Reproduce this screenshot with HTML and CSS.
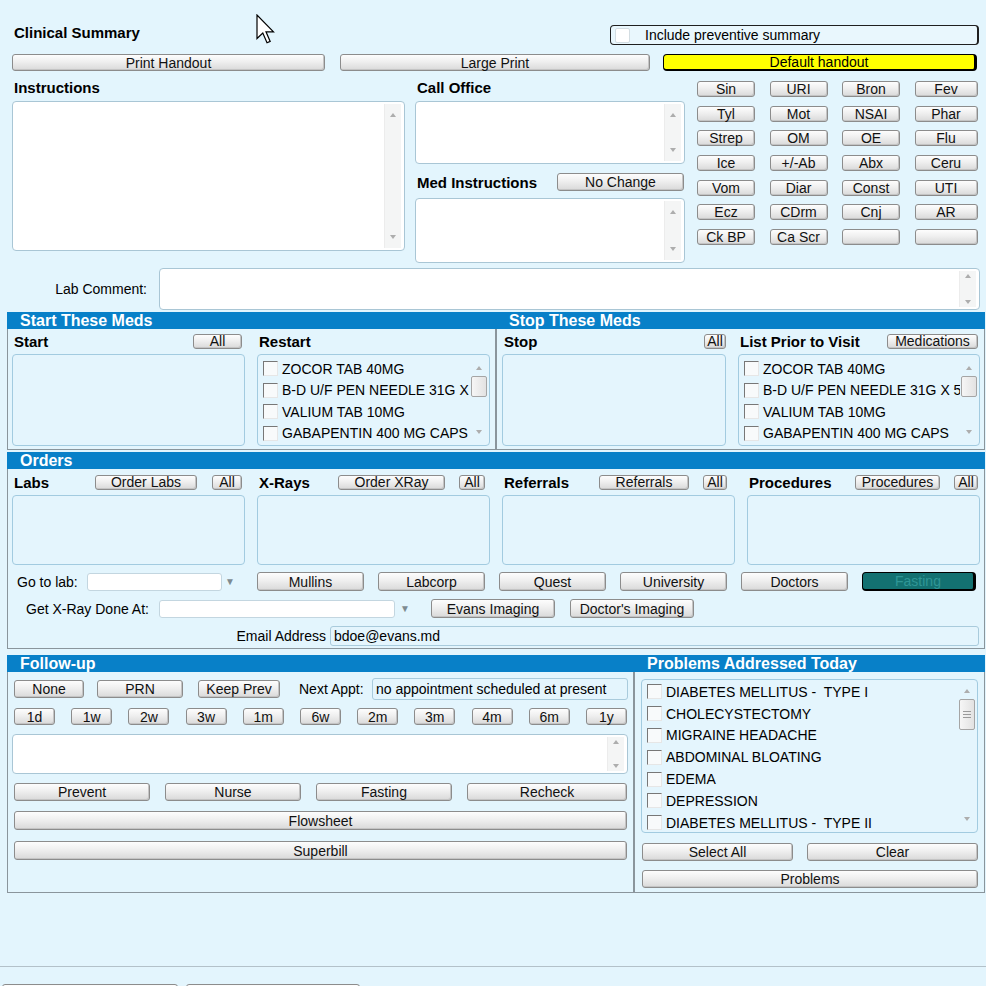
FILE: index.html
```html
<!DOCTYPE html>
<html>
<head>
<meta charset="utf-8">
<title>Clinical Summary</title>
<link rel="stylesheet" href="styles.css">
</head>
<body>
<div class="page">
  <svg class="cursor" width="19" height="30" viewBox="0 0 19 30"><path d="M1 1 L1 24.5 L6.8 19 L11 28.8 L14.2 27.4 L10 17.8 L17.5 17.8 Z" fill="#fff" stroke="#000" stroke-width="1.2"/></svg>

  <div class="top">
    <div class="row-a">
      <div class="title">Clinical Summary</div>
      <div class="prevbox"><span class="pchk"></span><span>Include preventive summary</span></div>
    </div>
    <div class="row-b">
      <button class="btn b-print">Print Handout</button>
      <button class="btn b-large">Large Print</button>
      <button class="btn b-default">Default handout</button>
    </div>
    <div class="row-c">
      <div class="col-instr">
        <div class="lbl">Instructions</div>
        <div class="ta ta-instr"><div class="sb"><i class="up"></i><i class="dn"></i></div></div>
      </div>
      <div class="col-mid">
        <div class="lbl">Call Office</div>
        <div class="ta ta-call"><div class="sb"><i class="up"></i><i class="dn"></i></div></div>
        <div class="med-row"><span class="lbl-b">Med Instructions</span><button class="btn b-nochange">No Change</button></div>
        <div class="ta ta-med"><div class="sb"><i class="up"></i><i class="dn"></i></div></div>
      </div>
      <div class="quick">
        <button class="btn q">Sin</button><button class="btn q">URI</button><button class="btn q">Bron</button><button class="btn q">Fev</button>
        <button class="btn q">Tyl</button><button class="btn q">Mot</button><button class="btn q">NSAI</button><button class="btn q">Phar</button>
        <button class="btn q">Strep</button><button class="btn q">OM</button><button class="btn q">OE</button><button class="btn q">Flu</button>
        <button class="btn q">Ice</button><button class="btn q">+/-Ab</button><button class="btn q">Abx</button><button class="btn q">Ceru</button>
        <button class="btn q">Vom</button><button class="btn q">Diar</button><button class="btn q">Const</button><button class="btn q">UTI</button>
        <button class="btn q">Ecz</button><button class="btn q">CDrm</button><button class="btn q">Cnj</button><button class="btn q">AR</button>
        <button class="btn q">Ck BP</button><button class="btn q">Ca Scr</button><button class="btn q"></button><button class="btn q"></button>
      </div>
    </div>
    <div class="row-d">
      <span class="lc-label">Lab Comment:</span>
      <div class="ta ta-lab"><div class="sb tight"><i class="up"></i><i class="dn"></i></div></div>
    </div>
  </div>

  <div class="sections">
    <div class="meds">
      <section class="box">
        <div class="hdr">Start These Meds</div>
        <div class="mbody start-body">
          <div class="lrow"><b>Start</b><button class="btn sm s-all">All</button></div>
          <div class="lrow"><b>Restart</b></div>
          <div class="list"></div>
          <div class="list chk">
            <div class="items">
              <div class="it"><span class="cb"></span>ZOCOR TAB 40MG</div>
              <div class="it"><span class="cb"></span>B-D U/F PEN NEEDLE 31G X</div>
              <div class="it"><span class="cb"></span>VALIUM TAB 10MG</div>
              <div class="it"><span class="cb"></span>GABAPENTIN 400 MG CAPS</div>
            </div>
            <div class="lsb"><i class="up"></i><span class="thumb"></span><span class="fill"></span><i class="dn"></i></div>
          </div>
        </div>
      </section>
      <section class="box">
        <div class="hdr">Stop These Meds</div>
        <div class="mbody stop-body">
          <div class="lrow"><b>Stop</b><button class="btn sm st-all">All</button></div>
          <div class="lrow"><b>List Prior to Visit</b><button class="btn sm st-med">Medications</button></div>
          <div class="list"></div>
          <div class="list chk">
            <div class="items">
              <div class="it"><span class="cb"></span>ZOCOR TAB 40MG</div>
              <div class="it"><span class="cb"></span>B-D U/F PEN NEEDLE 31G X 5</div>
              <div class="it"><span class="cb"></span>VALIUM TAB 10MG</div>
              <div class="it"><span class="cb"></span>GABAPENTIN 400 MG CAPS</div>
            </div>
            <div class="lsb"><i class="up"></i><span class="thumb"></span><span class="fill"></span><i class="dn"></i></div>
          </div>
        </div>
      </section>
    </div>

    <section class="box orders">
      <div class="hdr">Orders</div>
      <div class="obody">
        <div class="ogrid">
          <div class="lrow"><b>Labs</b><button class="btn sm o1">Order Labs</button><button class="btn sm a1">All</button></div>
          <div class="lrow"><b>X-Rays</b><button class="btn sm o2">Order XRay</button><button class="btn sm a2">All</button></div>
          <div class="lrow"><b>Referrals</b><button class="btn sm o3">Referrals</button><button class="btn sm a3">All</button></div>
          <div class="lrow"><b>Procedures</b><button class="btn sm o4">Procedures</button><button class="btn sm a4">All</button></div>
          <div class="list obox"></div>
          <div class="list obox"></div>
          <div class="list obox"></div>
          <div class="list obox"></div>
        </div>
        <div class="lab-row">
          <span class="gl-label">Go to lab:</span>
          <span class="inp sel-lab"></span>
          <span class="drop">&#9660;</span>
          <button class="btn lb">Mullins</button>
          <button class="btn lb">Labcorp</button>
          <button class="btn lb">Quest</button>
          <button class="btn lb">University</button>
          <button class="btn lb">Doctors</button>
          <button class="btn lb fasting">Fasting</button>
        </div>
        <div class="xray-row">
          <span class="xr-label">Get X-Ray Done At:</span>
          <span class="inp sel-xray"></span>
          <span class="drop d2">&#9660;</span>
          <button class="btn xb">Evans Imaging</button>
          <button class="btn xb xb2">Doctor's Imaging</button>
        </div>
        <div class="email-row">
          <span class="em-label">Email Address</span>
          <span class="inp em-inp">bdoe@evans.md</span>
        </div>
      </div>
    </section>

    <div class="lower">
      <section class="box follow">
        <div class="hdr">Follow-up</div>
        <div class="fbody">
          <div class="f-row1">
            <button class="btn f-none">None</button>
            <button class="btn f-prn">PRN</button>
            <button class="btn f-keep">Keep Prev</button>
            <span class="na">Next Appt:</span>
            <span class="inp na-inp">no appointment scheduled at present</span>
          </div>
          <div class="f-row2">
            <button class="btn d">1d</button><button class="btn d">1w</button><button class="btn d">2w</button><button class="btn d">3w</button><button class="btn d">1m</button><button class="btn d">6w</button><button class="btn d">2m</button><button class="btn d">3m</button><button class="btn d">4m</button><button class="btn d">6m</button><button class="btn d">1y</button>
          </div>
          <div class="ta ta-fu"><div class="sb tight"><i class="up"></i><i class="dn"></i></div></div>
          <div class="f-row4">
            <button class="btn f4">Prevent</button>
            <button class="btn f4">Nurse</button>
            <button class="btn f4">Fasting</button>
            <button class="btn f4 last">Recheck</button>
          </div>
          <button class="btn wide flow">Flowsheet</button>
          <button class="btn wide superbill">Superbill</button>
        </div>
      </section>
      <section class="box problems">
        <div class="hdr">Problems Addressed Today</div>
        <div class="pbody">
          <div class="list chk plist">
            <div class="items">
              <div class="it"><span class="cb"></span>DIABETES MELLITUS -&nbsp; TYPE I</div>
              <div class="it"><span class="cb"></span>CHOLECYSTECTOMY</div>
              <div class="it"><span class="cb"></span>MIGRAINE HEADACHE</div>
              <div class="it"><span class="cb"></span>ABDOMINAL BLOATING</div>
              <div class="it"><span class="cb"></span>EDEMA</div>
              <div class="it"><span class="cb"></span>DEPRESSION</div>
              <div class="it"><span class="cb"></span>DIABETES MELLITUS -&nbsp; TYPE II</div>
            </div>
            <div class="lsb"><i class="up"></i><span class="thumb grip"><i></i><i></i><i></i></span><span class="fill"></span><i class="dn"></i></div>
          </div>
          <div class="p-row">
            <button class="btn p-sel">Select All</button>
            <button class="btn p-clr">Clear</button>
          </div>
          <button class="btn p-prob">Problems</button>
        </div>
      </section>
    </div>
  </div>

  <div class="footer">
    <button class="btn ft1"></button>
    <button class="btn ft2"></button>
  </div>
</div>
</body>
</html>
```

FILE: styles.css
```css
* { box-sizing: border-box; }
html, body { margin: 0; height: 986px; overflow: hidden; }
body {
  background: #e3f5fd;
  font-family: "Liberation Sans", Arial, sans-serif;
  font-size: 14px;
  color: #000;
}
.page { position: relative; }
.cursor { position: absolute; left: 256px; top: 14px; z-index: 5; }

/* buttons */
.btn {
  -webkit-appearance: none;
  appearance: none;
  margin: 0;
  padding: 0;
  display: flex;
  align-items: center;
  justify-content: center;
  height: 18px;
  border: 1px solid #8c8c8c;
  border-radius: 3px;
  background: linear-gradient(#fdfdfd, #efefef 45%, #d9d9d9);
  box-shadow: inset -1px -1px 0 #c4c4c4;
  font: 14px "Liberation Sans", Arial, sans-serif;
  color: #111;
  white-space: nowrap;
  line-height: 16px;
  flex: none;
}
.btn.sm { height: 15px; font-size: 14px; line-height: 13px; border-radius: 3px; overflow: visible; }

/* top area */
.top { padding: 25px 7px 0 12px; }
.row-a { display: flex; justify-content: space-between; height: 20px; }
.title { font-weight: bold; font-size: 15px; line-height: 16px; padding-left: 2px; }
.prevbox {
  width: 369px; height: 20px;
  border: 1px solid #1f1f1f; border-right-width: 2px;
  border-radius: 4px;
  background: #e9f7fd;
  display: flex; align-items: center;
  padding-left: 4px;
}
.pchk {
  width: 15px; height: 15px;
  background: #fff;
  border: 1px solid #d3dde2;
  border-radius: 2px;
  margin-right: 15px;
}
.row-b { display: flex; margin-top: 9px; }
.row-b .btn { height: 17px; }
.b-print { width: 313px; }
.b-large { width: 310px; margin-left: 15px; }
.b-default {
  width: 314px; margin-left: 13px;
  background: #ffff00;
  border: 1px solid #000; border-right-width: 3px; border-bottom-width: 2px;
  border-radius: 4px;
  box-shadow: none;
  color: #000;
}

.row-c { display: flex; align-items: flex-start; margin-top: 8px; }
.lbl { height: 22px; line-height: 18px; font-weight: bold; font-size: 15px; padding-left: 2px; }
.lbl-b { font-weight: bold; font-size: 15px; padding-left: 2px; }
.col-instr { width: 393px; }
.col-mid { width: 270px; margin-left: 10px; }

.ta {
  background: #fff;
  border: 1px solid #a9c6d5;
  border-radius: 4px;
  display: flex;
  justify-content: flex-end;
  padding: 2px 3px 2px 2px;
}
.ta-instr { height: 150px; }
.ta-call { height: 63px; }
.ta-med { height: 65px; margin-top: 7px; }
.med-row { display: flex; align-items: center; height: 18px; margin-top: 9px; }
.b-nochange { width: 127px; margin-left: auto; margin-right: 1px; }

.sb {
  width: 17px;
  background: #f4f5f5;
  border-left: 1px solid #ececec;
  display: flex; flex-direction: column; align-items: center; justify-content: space-between;
  padding: 9px 0;
}
.sb.tight { padding: 3px 0; }
.up, .dn { display: block; width: 0; height: 0; border-left: 3.5px solid transparent; border-right: 3.5px solid transparent; }
.up { border-bottom: 4px solid #adadad; }
.dn { border-top: 4px solid #adadad; }

.quick {
  margin-left: 12px;
  margin-top: 2px;
  display: grid;
  grid-template-columns: 58px 58px 58px 63px;
  grid-auto-rows: 16px;
  column-gap: 14.5px;
  row-gap: 8.67px;
}
.q { height: 16px; width: 100%; line-height: 14px; }

.row-d { display: flex; align-items: center; height: 42px; margin-top: 5px; }
.lc-label { width: 135px; text-align: right; font-size: 14px; }
.ta-lab { flex: 1; height: 42px; margin-left: 12px; margin-right: -1px; }

/* sections */
.sections { padding: 0 1px 0 7px; margin-top: 2px; }
.box { border: 1px solid #8a959c; border-top: none; }
.hdr {
  height: 17px;
  margin: 0 -1px;
  background: #0880c8;
  color: #fff;
  font-weight: bold;
  font-size: 16px;
  line-height: 17px;
  padding-left: 13px;
}
.meds { display: grid; grid-template-columns: 489px 489px; }
.mbody { display: grid; grid-template-rows: 18px 92px; row-gap: 4px; column-gap: 12px; padding: 3px 0 3px 0; }
.start-body { grid-template-columns: 233px 233px; padding-left: 4px; }
.stop-body { grid-template-columns: 224px 242px; padding-left: 5px; }
.lrow { display: flex; align-items: center; }
.lrow b { font-size: 15px; padding-left: 2px; }
.s-all { width: 49px; margin-left: auto; margin-right: 3px; }
.st-all { width: 22px; margin-left: auto; }
.st-med { width: 91px; margin-left: auto; margin-right: 2px; }

.list {
  border: 1px solid #a2cbe0;
  border-radius: 4px;
  background: #e4f5fd;
}
.list.chk { display: flex; overflow: hidden; }
.items { flex: 1; min-width: 0; overflow: hidden; padding: 3px 0 0 5px; }
.it { height: 21.5px; display: flex; align-items: center; white-space: nowrap; overflow: hidden; }
.cb {
  width: 15px; height: 15px; flex: none;
  border: 1px solid;
  border-color: #777 #e6e6e6 #e6e6e6 #777;
  background: #f8fafb;
  margin-right: 4px;
}
.lsb {
  width: 19px; flex: none;
  display: flex; flex-direction: column; align-items: center;
  padding: 11px 2px 11px 0;
}
.lsb .thumb {
  width: 16px; height: 21px; margin-top: 6px;
  border: 1px solid #a5a5a5;
  border-radius: 2px;
  background: linear-gradient(90deg, #f6f6f6, #e2e2e2);
}
.lsb .fill { flex: 1; }
.thumb.grip { height: 31px; display: flex; flex-direction: column; align-items: center; justify-content: center; gap: 2px; }
.thumb.grip i { display: block; width: 8px; height: 1px; background: #9a9a9a; }

/* orders */
.orders { margin-top: 2px; }
.obody { padding: 4px 5px 2px 4px; }
.ogrid { display: grid; grid-template-columns: repeat(4, 233px); grid-template-rows: 18px 70px; column-gap: 12px; row-gap: 4px; }
.o1 { width: 102px; margin-left: auto; }
.a1 { width: 30px; margin-left: 15px; margin-right: 3px; }
.o2 { width: 107px; margin-left: auto; }
.a2 { width: 26px; margin-left: 14px; margin-right: 5px; }
.o3 { width: 90px; margin-left: auto; }
.a3 { width: 24px; margin-left: 14px; margin-right: 8px; }
.o4 { width: 85px; margin-left: auto; }
.a4 { width: 24px; margin-left: 14px; margin-right: 2px; }

.inp {
  display: block;
  height: 18px;
  background: #fff;
  border: 1px solid #c3d6e0;
  border-radius: 3px;
}
.drop { color: #7e8a91; font-size: 10px; }
.lab-row { display: flex; align-items: center; height: 19px; margin-top: 7px; }
.gl-label { width: 75px; padding-left: 5px; }
.sel-lab { width: 135px; }
.lab-row .drop { width: 35px; padding-left: 3px; }
.lb { width: 107px; height: 19px; }
.lb + .lb { margin-left: 14px; }
.fasting {
  width: 114px;
  background: #137171;
  color: #2f9696;
  border: 1px solid #000; border-right-width: 3px; border-bottom-width: 2px;
  border-radius: 4px;
  box-shadow: none;
}
.xray-row { display: flex; align-items: center; height: 19px; margin-top: 8px; }
.xr-label { width: 147px; padding-left: 14px; }
.sel-xray { width: 236px; }
.xray-row .drop { width: 36px; padding-left: 5px; }
.xb { width: 124px; height: 19px; }
.xb2 { margin-left: 15px; }
.email-row { display: flex; align-items: center; justify-content: flex-end; height: 20px; margin-top: 8px; }
.em-label { margin-right: 4px; }
.em-inp { width: 649px; height: 20px; background: #e4f5fd; border-color: #a9cbdc; line-height: 18px; padding-left: 3px; }

/* lower */
.lower { display: grid; grid-template-columns: 627px 351px; margin-top: 6px; }
.fbody { padding: 6px 5px 0 4px; }
.f-row1 { display: flex; align-items: center; height: 22px; }
.f-none { width: 70px; margin-left: 2px; }
.f-prn { width: 86px; margin-left: 13px; }
.f-keep { width: 82px; margin-left: 15px; }
.na { margin-left: 19px; }
.na-inp { width: 256px; height: 22px; margin-left: auto; background: #e4f5fd; border-color: #a9cbdc; line-height: 20px; padding-left: 3px; white-space: nowrap; }
.f-row2 { display: flex; justify-content: space-between; height: 17px; margin-top: 8px; padding: 0 1px 0 2px; }
.d { width: 41px; height: 17px; }
.ta-fu { height: 40px; margin-top: 9px; }
.f-row4 { display: flex; height: 18px; margin-top: 9px; padding: 0 1px 0 2px; }
.f4 { width: 136px; }
.f4 + .f4 { margin-left: 15px; }
.f4.last { flex: 1; width: auto; }
.wide { width: calc(100% - 3px); margin-left: 2px; height: 19px; }
.flow { margin-top: 10px; }
.superbill { margin-top: 11px; }

.pbody { padding: 7px 6px 4px 6px; }
.plist { height: 154px; }
.plist .items { padding-top: 1px; }
.plist .it { height: 21.8px; }
.plist .lsb { padding-top: 9px; padding-bottom: 11px; }
.p-row { display: flex; margin-top: 10px; }
.p-sel { width: 151px; margin-left: 1px; }
.p-clr { width: 171px; margin-left: 14px; }
.p-prob { width: calc(100% - 1px); margin-left: 1px; margin-top: 9px; }

.footer {
  margin-top: 73px;
  border-top: 1px solid #b3c1c9;
  padding: 17px 0 0 2px;
  display: flex;
  gap: 8px;
}
.ft1 { width: 176px; height: 20px; }
.ft2 { width: 174px; height: 20px; }
```
